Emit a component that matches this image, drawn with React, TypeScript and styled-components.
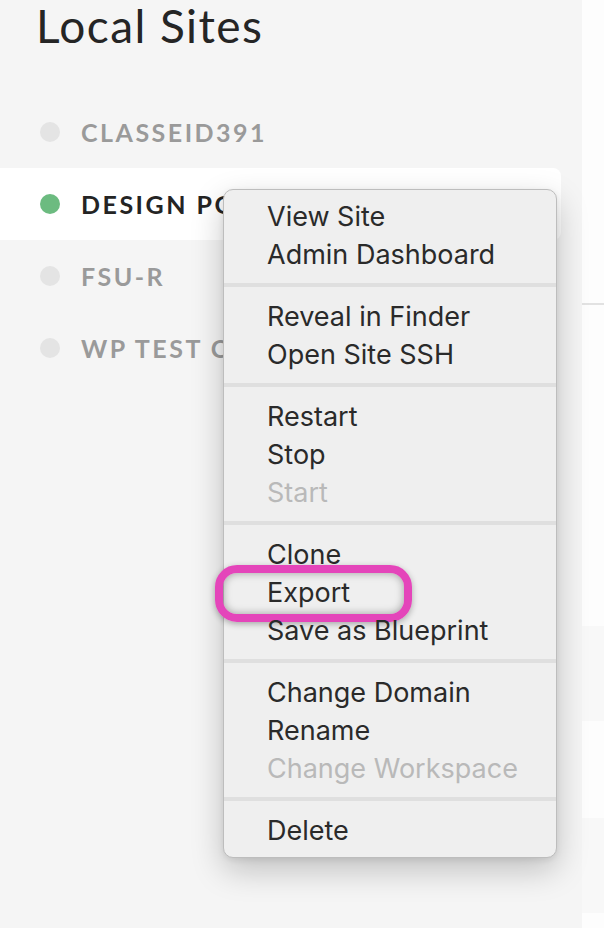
import React from "react";
import styled, { createGlobalStyle } from "styled-components";

const Global = createGlobalStyle`
  html, body { margin: 0; padding: 0; background: #f5f5f5; }
  body { width: 604px; height: 928px; overflow: hidden; }
  *, *::before, *::after { box-sizing: border-box; }
`;

const Page = styled.div`
  position: relative;
  display: flex;
  width: 604px;
  height: 928px;
  overflow: hidden;
`;

const Sidebar = styled.aside`
  width: 582px;
  flex: none;
  background: #f5f5f5;
  display: flex;
  flex-direction: column;
`;

const Title = styled.h1`
  margin: 0;
  padding: 3px 0 0 36px;
  height: 96px;
  font-family: Lato, "Open Sans", sans-serif;
  font-weight: 400;
  font-size: 46px;
  line-height: 46px;
  letter-spacing: 1.4px;
  color: #252525;
`;

const SiteList = styled.ul`
  list-style: none;
  margin: 0;
  padding: 0;
`;

const SiteRow = styled.li<{ $active?: boolean }>`
  display: flex;
  align-items: center;
  gap: 21px;
  height: 72px;
  width: 561px;
  padding-left: 40px;
  background: ${(p) => (p.$active ? "#ffffff" : "transparent")};
  border-radius: 0 8px 8px 0;
`;

const Dot = styled.span<{ $on?: boolean }>`
  width: 20px;
  height: 20px;
  border-radius: 50%;
  flex: none;
  background: ${(p) => (p.$on ? "#6cbb80" : "#e4e4e4")};
`;

const SiteName = styled.span<{ $active?: boolean }>`
  font-family: Lato, "Open Sans", sans-serif;
  font-weight: 700;
  font-size: 25px;
  letter-spacing: 2.5px;
  color: ${(p) => (p.$active ? "#242424" : "#9a9a9a")};
  white-space: nowrap;
`;

const Main = styled.main`
  flex: 1;
  display: flex;
  flex-direction: column;
  background: #fdfdfd;
`;

const Band = styled.div<{ $h: number; $bg: string; $line?: boolean }>`
  height: ${(p) => p.$h}px;
  flex: none;
  background: ${(p) => p.$bg};
  border-bottom: ${(p) => (p.$line ? "2px solid #e2e2e2" : "none")};
`;

const Menu = styled.div`
  position: absolute;
  left: 223px;
  top: 189px;
  width: 334px;
  padding: 7px 0 8px;
  background: #efefef;
  border: 1px solid #bdbdbd;
  border-radius: 10px;
  box-shadow: 0 12px 32px rgba(0, 0, 0, 0.22), 0 2px 6px rgba(0, 0, 0, 0.08);
  font-family: Inter, Roboto, "Open Sans", sans-serif;
`;

const Group = styled.div`
  display: flex;
  flex-direction: column;
`;

const Separator = styled.div`
  height: 4px;
  margin: 10px 0;
  background: #dfdfdf;
`;

const Item = styled.div<{ $disabled?: boolean; $marked?: boolean }>`
  position: relative;
  height: 38px;
  display: flex;
  align-items: center;
  padding-left: 43px;
  font-size: 27px;
  color: ${(p) => (p.$disabled ? "#b9b9b9" : "#2a2a2a")};
  white-space: nowrap;
  ${(p) =>
    p.$marked &&
    `
    &::after {
      content: "";
      position: absolute;
      left: -9px;
      top: -8px;
      width: 197px;
      height: 57px;
      border: 8px solid #e445ba;
      border-radius: 22px;
      box-shadow: inset 0 0 9px rgba(0,0,0,0.35), 0 2px 6px rgba(0,0,0,0.3);
    }
  `}
`;

type MenuEntry = { label: string; disabled?: boolean; marked?: boolean };

const groups: MenuEntry[][] = [
  [{ label: "View Site" }, { label: "Admin Dashboard" }],
  [{ label: "Reveal in Finder" }, { label: "Open Site SSH" }],
  [{ label: "Restart" }, { label: "Stop" }, { label: "Start", disabled: true }],
  [{ label: "Clone" }, { label: "Export", marked: true }, { label: "Save as Blueprint" }],
  [
    { label: "Change Domain" },
    { label: "Rename" },
    { label: "Change Workspace", disabled: true },
  ],
  [{ label: "Delete" }],
];

const sites = [
  { name: "CLASSEID391", on: false },
  { name: "DESIGN PORTFOLIO", on: true, active: true },
  { name: "FSU-R", on: false },
  { name: "WP TEST CLASS", on: false },
];

export default function App() {
  return (
    <Page>
      <Global />
      <Sidebar>
        <Title>Local Sites</Title>
        <SiteList>
          {sites.map((s) => (
            <SiteRow key={s.name} $active={s.active}>
              <Dot $on={s.on} />
              <SiteName $active={s.active}>{s.name}</SiteName>
            </SiteRow>
          ))}
        </SiteList>
      </Sidebar>
      <Main>
        <Band $h={305} $bg="#fdfdfd" $line />
        <Band $h={321} $bg="#fdfdfd" />
        <Band $h={95} $bg="#f8f8f8" />
        <Band $h={97} $bg="#fdfdfd" />
        <Band $h={95} $bg="#f8f8f8" />
        <Band $h={20} $bg="#fdfdfd" />
      </Main>
      <Menu>
        {groups.map((g, gi) => (
          <React.Fragment key={gi}>
            {gi > 0 && <Separator />}
            <Group>
              {g.map((it) => (
                <Item key={it.label} $disabled={it.disabled} $marked={it.marked}>
                  {it.label}
                </Item>
              ))}
            </Group>
          </React.Fragment>
        ))}
      </Menu>
    </Page>
  );
}
